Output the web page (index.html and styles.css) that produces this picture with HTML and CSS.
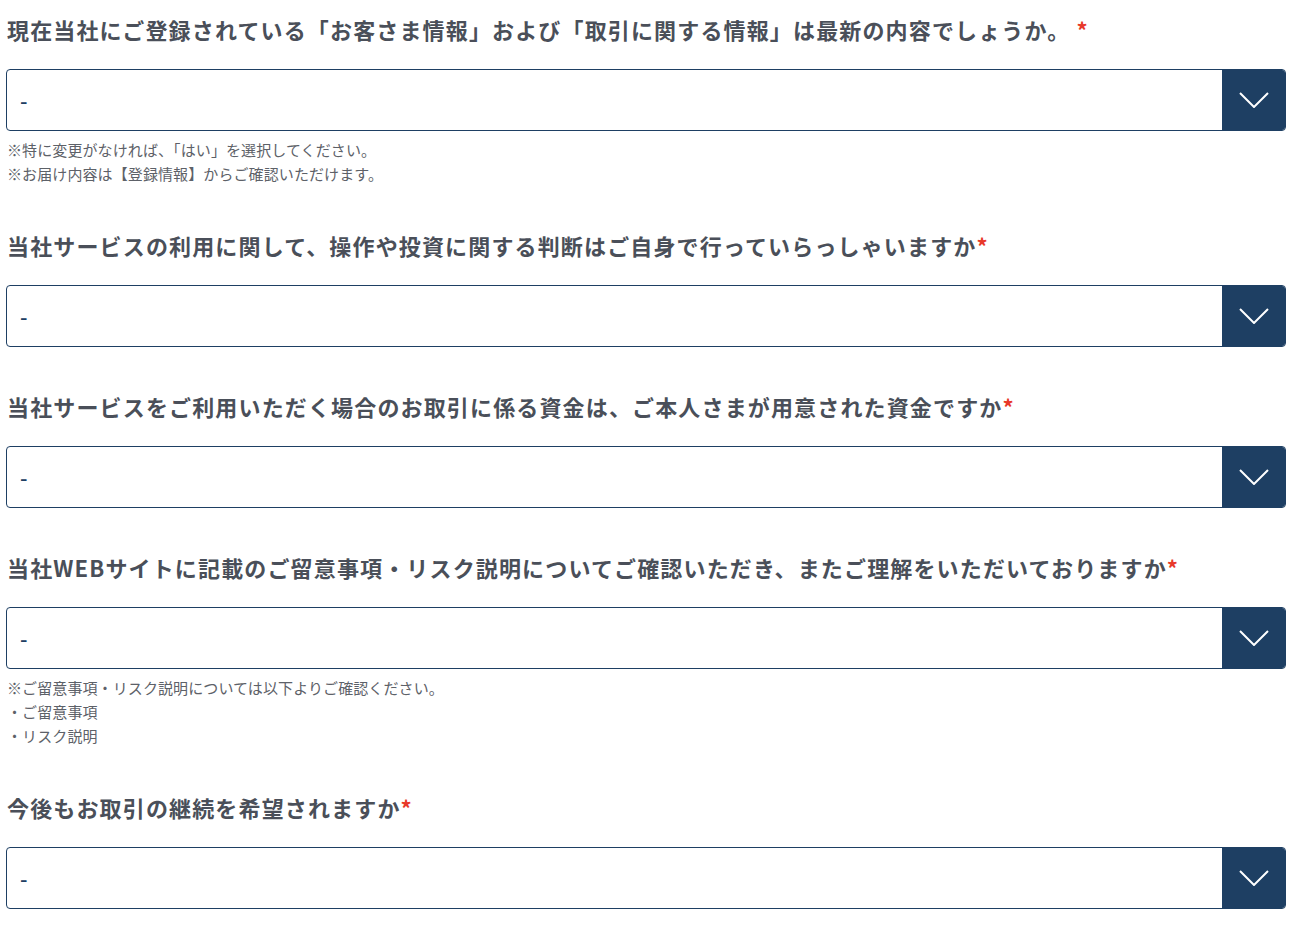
FILE: index.html
```html
<!DOCTYPE html>
<html lang="ja">
<head>
<meta charset="utf-8">
<title>確認フォーム</title>
<link rel="stylesheet" href="styles.css">
</head>
<body>
<form class="form">
  <div class="field">
    <p class="label">現在当社にご登録されている「お客さま情報」および「取引に関する情報」は最新の内容でしょうか。 <span class="req">*</span></p>
    <div class="select"><span class="value">-</span><span class="btn"><svg width="30" height="16" viewBox="0 0 30 16"><polyline points="1,1 15,15 29,1" fill="none" stroke="#fff" stroke-width="2"/></svg></span></div>
    <div class="notes">
      <p>※特に変更がなければ、「はい」を選択してください。</p>
      <p>※お届け内容は【登録情報】からご確認いただけます。</p>
    </div>
  </div>
  <div class="field">
    <p class="label">当社サービスの利用に関して、操作や投資に関する判断はご自身で行っていらっしゃいますか<span class="req">*</span></p>
    <div class="select"><span class="value">-</span><span class="btn"><svg width="30" height="16" viewBox="0 0 30 16"><polyline points="1,1 15,15 29,1" fill="none" stroke="#fff" stroke-width="2"/></svg></span></div>
  </div>
  <div class="field">
    <p class="label">当社サービスをご利用いただく場合のお取引に係る資金は、ご本人さまが用意された資金ですか<span class="req">*</span></p>
    <div class="select"><span class="value">-</span><span class="btn"><svg width="30" height="16" viewBox="0 0 30 16"><polyline points="1,1 15,15 29,1" fill="none" stroke="#fff" stroke-width="2"/></svg></span></div>
  </div>
  <div class="field">
    <p class="label">当社WEBサイトに記載のご留意事項・リスク説明についてご確認いただき、またご理解をいただいておりますか<span class="req">*</span></p>
    <div class="select"><span class="value">-</span><span class="btn"><svg width="30" height="16" viewBox="0 0 30 16"><polyline points="1,1 15,15 29,1" fill="none" stroke="#fff" stroke-width="2"/></svg></span></div>
    <div class="notes">
      <p>※ご留意事項・リスク説明については以下よりご確認ください。</p>
      <p>・ご留意事項</p>
      <p>・リスク説明</p>
    </div>
  </div>
  <div class="field">
    <p class="label">今後もお取引の継続を希望されますか<span class="req">*</span></p>
    <div class="select"><span class="value">-</span><span class="btn"><svg width="30" height="16" viewBox="0 0 30 16"><polyline points="1,1 15,15 29,1" fill="none" stroke="#fff" stroke-width="2"/></svg></span></div>
  </div>
</form>
</body>
</html>
```

FILE: styles.css
```css
html, body {
  margin: 0;
  padding: 0;
  background: #ffffff;
}

body {
  font-family: "Noto Sans CJK JP", "Noto Sans", sans-serif;
  color: #4a4f59;
}

p {
  margin: 0;
}

.form {
  padding: 15px 10px 0 6px;
  display: flex;
  flex-direction: column;
  gap: 45px;
}

.field {
  display: flex;
  flex-direction: column;
}

.label {
  font-size: 22px;
  font-weight: 700;
  line-height: 28px;
  letter-spacing: 1.15px;
  padding-left: 1px;
  margin-bottom: 26px;
  white-space: nowrap;
}

.req {
  color: #e8392a;
}

.select {
  height: 62px;
  box-sizing: border-box;
  border: 1px solid #1e3f63;
  border-radius: 4px;
  display: flex;
  align-items: stretch;
  overflow: hidden;
}

.value {
  flex: 1;
  display: flex;
  align-items: center;
  padding-left: 13px;
  font-size: 21px;
  font-weight: 500;
  color: #1e3f63;
}

.btn {
  width: 63px;
  background: #1e3f63;
  display: flex;
  align-items: center;
  justify-content: center;
}

.notes {
  margin-top: 7px;
  font-size: 15px;
  line-height: 24px;
  letter-spacing: 0.1px;
  color: #5d6168;
  padding-left: 1px;
}
```
